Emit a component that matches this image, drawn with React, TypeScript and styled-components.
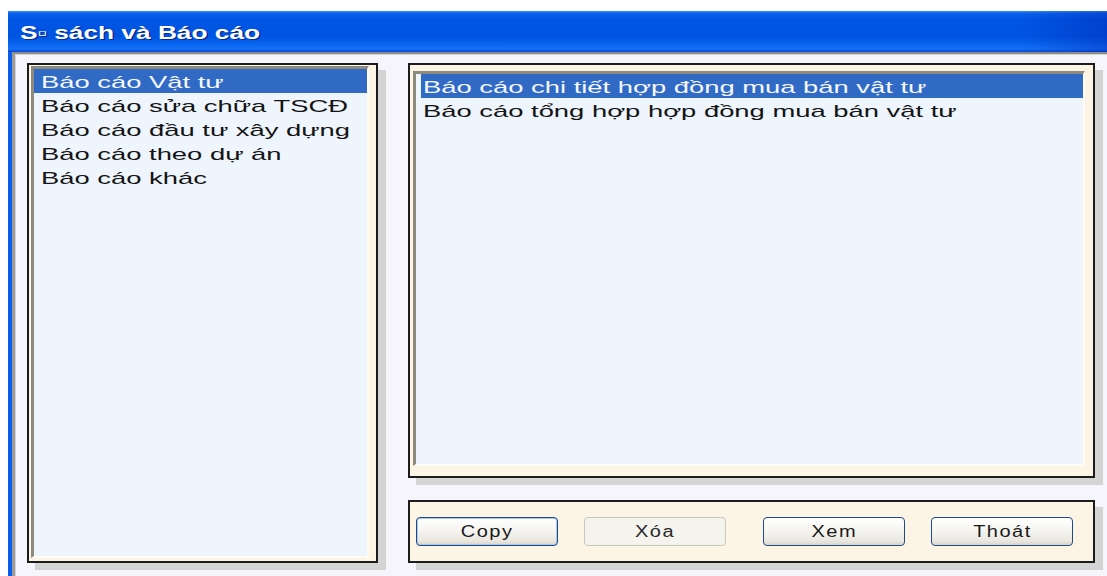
import React from 'react';
import styled, { createGlobalStyle } from 'styled-components';

const GlobalStyle = createGlobalStyle`
  html,
  body {
    margin: 0;
    padding: 0;
    background: #ffffff;
    overflow: hidden;
  }
  body {
    font-family: 'Liberation Sans', Arial, sans-serif;
  }
`;

const Window = styled.div`
  margin: 11px 0 0 8px;
  height: 565px;
  display: flex;
  flex-direction: column;
`;

const TitleBar = styled.div`
  height: 41px;
  display: flex;
  align-items: center;
  padding-left: 12px;
  background:
    linear-gradient(to right, rgba(0, 40, 190, 0) 0%, rgba(0, 40, 190, 0) 92%, rgba(0, 30, 170, 0.35) 100%),
    linear-gradient(
      to bottom,
      #3a8ef6 0%,
      #0a62ec 6%,
      #0055e3 20%,
      #0054e2 62%,
      #0a66f0 82%,
      #1572f6 92%,
      #0b5ae6 97%,
      #0846c8 100%
    );
`;

// old dialog text is drawn wide: stretch it horizontally around an origin
const Stretch = styled.span<{ $scale: number; $spacing?: number; $origin?: string }>`
  display: inline-block;
  white-space: nowrap;
  letter-spacing: ${(p) => p.$spacing ?? 0}px;
  transform: scaleX(${(p) => p.$scale});
  transform-origin: ${(p) => p.$origin ?? 'left'} center;
`;

const TitleText = styled(Stretch)`
  color: #ffffff;
  font-weight: bold;
  font-size: 18px;
  text-shadow: 1px 1px 0 #0b2a8a;
  margin-top: 4px;
`;

/* blue window edge on the left, grey 3D line inside it */
const Frame = styled.div`
  flex: 1;
  display: flex;
  border-left: 4px solid #0a5ce9;
`;

const Body = styled.div`
  flex: 1;
  display: grid;
  grid-template-columns: 351px 687px;
  column-gap: 30px;
  align-content: start;
  padding: 9px 0 0 12px;
  background: #f5f5fb;
  border-top: 2px solid #8a8a8a;
  border-left: 3px solid #9b9b9b;
  box-shadow: inset 1px 1px 0 #d4d4d4;
`;

const Column = styled.div`
  display: flex;
  flex-direction: column;
  gap: 22px;
`;

const Panel = styled.div<{ $height: number; $pad: string }>`
  height: ${(p) => p.$height}px;
  box-sizing: border-box;
  border: 2px solid #1c1c1c;
  background: #fcf4e5;
  padding: ${(p) => p.$pad};
  display: flex;
  flex-direction: column;
  box-shadow: 8px 7px 0 #d4d4d4;
`;

const ListBox = styled.div<{ $inset?: number }>`
  flex: 1;
  background: #eef5fd;
  border-top: 3px solid #8e8a7e;
  border-left: 3px solid #8e8a7e;
  border-right: 2px solid #fffcf4;
  border-bottom: 2px solid #fffcf4;
  padding-left: ${(p) => p.$inset ?? 0}px;
  display: flex;
  flex-direction: column;
`;

const Row = styled.div<{ $selected?: boolean; $indent: number }>`
  height: 24px;
  box-sizing: border-box;
  padding: 3px 0 0 ${(p) => p.$indent}px;
  line-height: 21px;
  font-size: 17px;
  color: ${(p) => (p.$selected ? '#f4f7ff' : '#141414')};
  background: ${(p) => (p.$selected ? '#316ac5' : 'transparent')};
`;

const ButtonRow = styled.div`
  flex: 1;
  display: flex;
  align-items: center;
  padding-left: 6px;
`;

const Button = styled.button<{ $gap?: number; $focused?: boolean }>`
  width: 142px;
  height: 29px;
  margin-left: ${(p) => p.$gap ?? 0}px;
  border: 1px solid #1f4c86;
  border-radius: 4px;
  background: linear-gradient(to bottom, #ffffff 0%, #f6f5f1 45%, #e9e7df 85%, #d9d5c9 100%);
  box-shadow: ${(p) => (p.$focused ? 'inset 0 0 0 1px #a9c8ef' : 'none')};
  font-family: 'Liberation Sans', Arial, sans-serif;
  font-size: 16px;
  color: #1a1a1a;
  padding: 0;
  display: flex;
  align-items: center;
  justify-content: center;

  &:disabled {
    border-color: #c9c7ba;
    background: #f4f3ee;
    color: #2a2a2a;
  }
`;

const groups = ['Báo cáo Vật tư', 'Báo cáo sửa chữa TSCĐ', 'Báo cáo đầu tư xây dựng', 'Báo cáo theo dự án', 'Báo cáo khác'];

const reports = ['Báo cáo chi tiết hợp đồng mua bán vật tư', 'Báo cáo tổng hợp hợp đồng mua bán vật tư'];

const ListText = ({ children }: { children: string }) => <Stretch $scale={1.61}>{children}</Stretch>;

const ButtonText = ({ children }: { children: string }) => (
  <Stretch $scale={1.25} $spacing={1.2} $origin='center'>
    {children}
  </Stretch>
);

const App = () => {
  return (
    <>
      <GlobalStyle />
      <Window>
        <TitleBar>
          <TitleText $scale={1.46}>S▫ sách và Báo cáo</TitleText>
        </TitleBar>
        <Frame>
          <Body>
            <Panel $height={500} $pad='1px 7px 3px 2px'>
              <ListBox>
                {groups.map((g, i) => (
                  <Row key={g} $selected={i === 0} $indent={7}>
                    <ListText>{g}</ListText>
                  </Row>
                ))}
              </ListBox>
            </Panel>
            <Column>
              <Panel $height={415} $pad='6px 8px 10px 3px'>
                <ListBox $inset={5}>
                  {reports.map((r, i) => (
                    <Row key={r} $selected={i === 0} $indent={2}>
                      <ListText>{r}</ListText>
                    </Row>
                  ))}
                </ListBox>
              </Panel>
              <Panel $height={63} $pad='0'>
                <ButtonRow>
                  <Button $focused>
                    <ButtonText>Copy</ButtonText>
                  </Button>
                  <Button $gap={26} disabled>
                    <ButtonText>Xóa</ButtonText>
                  </Button>
                  <Button $gap={37}>
                    <ButtonText>Xem</ButtonText>
                  </Button>
                  <Button $gap={26}>
                    <ButtonText>Thoát</ButtonText>
                  </Button>
                </ButtonRow>
              </Panel>
            </Column>
          </Body>
        </Frame>
      </Window>
    </>
  );
};

export default App;
